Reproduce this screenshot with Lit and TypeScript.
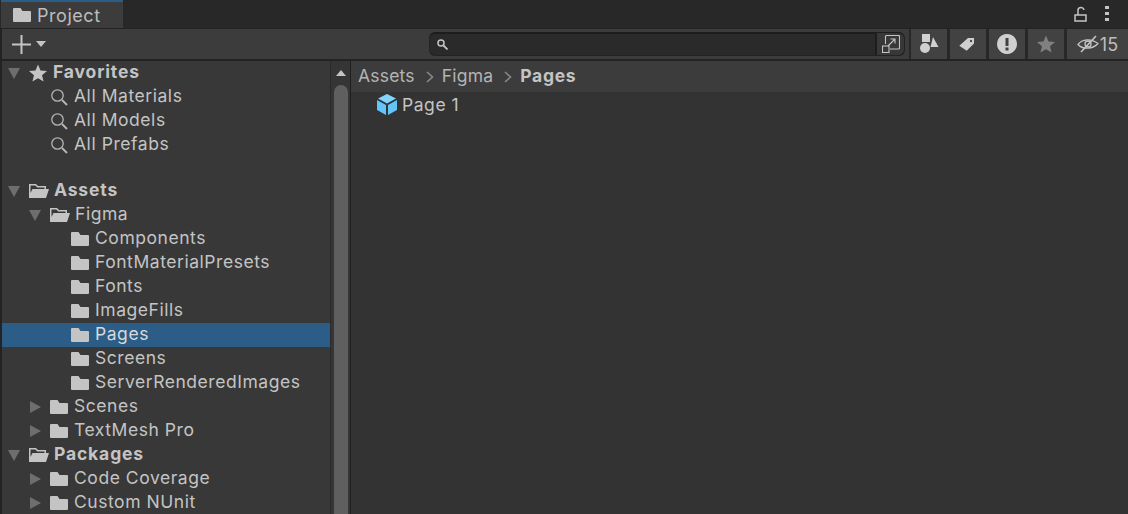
import { LitElement, html, css, svg } from 'lit';
import { customElement } from 'lit/decorators.js';

type Row = { label: string; depth: number; icon: 'star' | 'search' | 'open' | 'folder'; arrow?: 'down' | 'right'; bold?: boolean; selected?: boolean };

const ROWS: (Row | null)[] = [
  { label: 'Favorites', depth: 0, icon: 'star', arrow: 'down', bold: true },
  { label: 'All Materials', depth: 1, icon: 'search' },
  { label: 'All Models', depth: 1, icon: 'search' },
  { label: 'All Prefabs', depth: 1, icon: 'search' },
  null,
  { label: 'Assets', depth: 0, icon: 'open', arrow: 'down', bold: true },
  { label: 'Figma', depth: 1, icon: 'open', arrow: 'down' },
  { label: 'Components', depth: 2, icon: 'folder' },
  { label: 'FontMaterialPresets', depth: 2, icon: 'folder' },
  { label: 'Fonts', depth: 2, icon: 'folder' },
  { label: 'ImageFills', depth: 2, icon: 'folder' },
  { label: 'Pages', depth: 2, icon: 'folder', selected: true },
  { label: 'Screens', depth: 2, icon: 'folder' },
  { label: 'ServerRenderedImages', depth: 2, icon: 'folder' },
  { label: 'Scenes', depth: 1, icon: 'folder', arrow: 'right' },
  { label: 'TextMesh Pro', depth: 1, icon: 'folder', arrow: 'right' },
  { label: 'Packages', depth: 0, icon: 'open', arrow: 'down', bold: true },
  { label: 'Code Coverage', depth: 1, icon: 'folder', arrow: 'right' },
  { label: 'Custom NUnit', depth: 1, icon: 'folder', arrow: 'right' },
];

const ICON_FILL = '#c4c4c4';

const folderIcon = svg`<svg width="18" height="16" viewBox="0 0 18 16"><path fill=${ICON_FILL} d="M1 1h6.500l2 3H17a1 1 0 0 1 1 1v9a1 1 0 0 1-1 1H1a1 1 0 0 1-1-1V2a1 1 0 0 1 1-1z"/></svg>`;
const openIcon = svg`<svg width="20" height="16" viewBox="0 0 20 16"><path fill=${ICON_FILL} fill-rule="evenodd" d="M0 1h7l2 2h8v3h3l-3 9H0zM1.500 2.500v7.500L3.500 6H15.500V4.500H8.300l-2-2z"/></svg>`;
const searchIcon = svg`<svg width="18" height="18" viewBox="0 0 18 18"><circle cx="7.500" cy="7.500" r="5.700" fill="none" stroke="#b4b4b4" stroke-width="1.300"/><path d="M12 12l5 5" stroke="#b4b4b4" stroke-width="2"/></svg>`;
const starIcon = svg`<svg width="18" height="18" viewBox="0 0 18 18"><path fill=${ICON_FILL} d="M9 .5l2.500 6 6.500.5-5 4.300 1.600 6.300L9 14.200 3.400 17.600 5 11.300 0 7l6.500-.5z"/></svg>`;

const ICONS = { folder: folderIcon, open: openIcon, search: searchIcon, star: starIcon };

const chevron = svg`<svg width="8" height="12" viewBox="0 0 8 12" fill="none" stroke="#8a8a8a" stroke-width="1.600"><path d="M1 1l5.500 5L1 11" /></svg>`;

@customElement('app-root')
export class AppRoot extends LitElement {
  static styles = css`
    :host {
      display: block;
      width: 1128px;
      height: 514px;
      overflow: hidden;
      background: #232323;
      font-family: Inter, 'Noto Sans', sans-serif;
      font-size: 17.500px;
      letter-spacing: 0.55px;
      color: #c4c4c4;
    }

    .tabbar {
      height: 28px;
      display: flex;
      justify-content: space-between;
      background: #282828;
    }
    .tab {
      width: 122px;
      margin-left: 1px;
      height: 28px;
      box-sizing: border-box;
      background: #3c3c3c;
      border-top: 2px solid #2c5d87;
      display: flex;
      align-items: center;
      gap: 6px;
      padding-left: 12px;
      color: #bdbdbd;
      font-size: 18px;
    }
    .tab-actions {
      display: flex;
      align-items: center;
      gap: 17px;
      padding-right: 19px;
    }

    .toolbar {
      height: 30px;
      margin-top: 1px;
      display: flex;
      align-items: center;
      background: #3c3c3c;
      margin-left: 2px;
    }
    .create {
      display: flex;
      align-items: center;
      gap: 5px;
      padding-left: 10px;
    }
    .search-box {
      margin-left: 383px;
      width: 476px;
      height: 24px;
      box-sizing: border-box;
      background: #2a2a2a;
      border-radius: 6px;
      border: 1px solid #232323;
      border-top: 2px solid #1d1d1d;
      display: flex;
      align-items: center;
      justify-content: space-between;
      padding-left: 7px;
    }
    .search-expand {
      width: 27px;
      height: 22px;
      margin-top: -1px;
      background: #383838;
      border-left: 2px solid #1d1d1d;
      display: flex;
      align-items: center;
      justify-content: center;
      border-radius: 0 6px 6px 0;
    }
    .filters {
      display: flex;
      margin-left: 4px;
      padding-left: 2px;
      gap: 3px;
      background: #282828;
    }
    .filter {
      width: 36px;
      height: 30px;
      background: #424242;
      display: flex;
      align-items: center;
      justify-content: center;
    }
    .filter.wide {
      width: 61px;
      gap: 1px;
      font-size: 18px;
      color: #bdbdbd;
      letter-spacing: 0;
    }

    .main {
      margin-top: 2px;
      display: flex;
      height: 453px;
    }
    .tree {
      width: 328px;
      margin-left: 2px;
      background: #383838;
    }
    .row {
      height: 24px;
      display: flex;
      align-items: center;
      white-space: nowrap;
    }
    .row.selected {
      background: #2c5d87;
      color: #d8d8d8;
    }
    .row.bold {
      font-weight: 700;
      letter-spacing: 0.85px;
    }
    .label {
      padding-bottom: 4px;
    }
    .spacer {
      height: 22px;
    }
    .arrow {
      width: 12px;
      height: 12px;
      flex: none;
      margin-right: 9px;
    }
    .icon {
      flex: none;
      display: flex;
      align-items: center;
      margin-right: 6px;
    }
    .icon.tight {
      margin-right: 5px;
    }

    .scroll {
      width: 19px;
      background: #353535;
      border-left: 1px solid #2a2a2a;
      position: relative;
    }
    .scroll-up {
      position: absolute;
      left: 5px;
      top: 9px;
      width: 0;
      height: 0;
      border-left: 5px solid transparent;
      border-right: 5px solid transparent;
      border-bottom: 6px solid #c4c4c4;
    }
    .thumb {
      position: absolute;
      left: 3px;
      top: 24px;
      bottom: 0;
      width: 14px;
      background: #5f5f5f;
      border-radius: 7px 7px 0 0;
    }

    .content {
      flex: 1;
      background: #333333;
      border-left: 1px solid #1f1f1f;
    }
    .crumbs {
      height: 31px;
      box-sizing: border-box;
      padding: 0 0 2px 7px;
      background: #3c3c3c;
      display: flex;
      align-items: center;
      color: #b4b4b4;
      letter-spacing: 0.2px;
    }
    .crumbs b {
      color: #c4c4c4;
      font-weight: 700;
      letter-spacing: 0.7px;
    }
    .sep {
      display: flex;
      margin: 2px 8px 0 11px;
    }
    .asset {
      height: 24px;
      display: flex;
      align-items: center;
      gap: 5px;
      padding-left: 26px;
    }
  `;

  renderArrow(dir: 'down' | 'right') {
    const d = dir === 'down' ? 'M0 1h12L6 12z' : 'M1 0l11 6-11 6z';
    return html`<svg class="arrow" viewBox="0 0 12 12"><path fill="#6e6e6e" d=${d} /></svg>`;
  }

  renderRow(row: Row | null) {
    if (!row) return html`<div class="spacer"></div>`;
    const left = (row.arrow ? 6 : 27) + row.depth * 21;
    return html`
      <div class="row ${row.bold ? 'bold' : ''} ${row.selected ? 'selected' : ''}" style="padding-left: ${left}px">
        ${row.arrow ? this.renderArrow(row.arrow) : ''}
        <span class="icon ${row.icon === 'open' ? 'tight' : ''}">${ICONS[row.icon]}</span>
        <span class="label">${row.label}</span>
      </div>
    `;
  }

  render() {
    return html`
      <div class="tabbar">
        <div class="tab">
          <svg width="18" height="16" viewBox="0 0 18 16"><path fill=${ICON_FILL} d="M1 1h6.500l2 3H17a1 1 0 0 1 1 1v9a1 1 0 0 1-1 1H1a1 1 0 0 1-1-1V2a1 1 0 0 1 1-1z" /></svg>
          Project
        </div>
        <div class="tab-actions">
          <svg width="14" height="16" viewBox="0 0 14 16" fill="none" stroke="#c4c4c4" stroke-width="1.500">
            <path d="M1 9h11v6H1z" /><path d="M4 9V5a3 3 0 0 1 6-1" />
          </svg>
          <svg width="4" height="16" viewBox="0 0 4 16"><g fill="#c4c4c4"><rect y="0" width="4" height="3" /><rect y="6" width="4" height="3" /><rect y="12" width="4" height="3" /></g></svg>
        </div>
      </div>
      <div class="toolbar">
        <div class="create">
          <svg width="19" height="19" viewBox="0 0 19 19"><path fill="#c4c4c4" d="M8.500 0h2v8.500H19v2h-8.500V19h-2v-8.500H0v-2h8.500z" /></svg>
          <svg width="10" height="6" viewBox="0 0 10 6"><path fill="#c4c4c4" d="M0 0h10L5 6z" /></svg>
        </div>
        <div class="search-box">
          <svg width="11" height="11" viewBox="0 0 11 11" fill="none" stroke="#c4c4c4"><circle cx="4" cy="4" r="3" stroke-width="1.500" /><path d="M6.500 6.500l4 4" stroke-width="1.800" /></svg>
          <div class="search-expand">
            <svg width="18" height="18" viewBox="0 0 18 18" fill="none" stroke="#c4c4c4" stroke-width="1.100">
              <path d="M3.500 9V1.500a1 1 0 0 1 1-1h12a1 1 0 0 1 1 1V13a1 1 0 0 1-1 1H8" />
              <rect x=".5" y="11" width="6.500" height="6.500" />
              <path d="M6 11l7-7M8.500 4H13v4.500" />
            </svg>
          </div>
        </div>
        <div class="filters">
          <div class="filter">
            <svg width="20" height="20" viewBox="0 0 20 20"><g fill="#d0d0d0"><rect x="3" y="0" width="8" height="8" /><circle cx="6" cy="14" r="5" /><path d="M14 3l5.500 10h-8z" /></g></svg>
          </div>
          <div class="filter">
            <svg width="18" height="18" viewBox="0 0 18 18"><path fill="#d0d0d0" fill-rule="evenodd" d="M9 3h6v5.500L7.700 15.700.3 10.700zM12 4.800a1.200 1.200 0 1 0 .01 0z" /></svg>
          </div>
          <div class="filter">
            <svg width="20" height="20" viewBox="0 0 20 20"><path fill="#d0d0d0" fill-rule="evenodd" d="M10 0a10 10 0 1 0 .01 0zM8.500 4h3v8h-3zM8.500 13.500h3v3h-3z" /></svg>
          </div>
          <div class="filter">
            <svg width="18" height="18" viewBox="0 0 18 18"><path fill="#808080" d="M9 .5l2.500 6 6.500.5-5 4.300 1.600 6.300L9 14.200 3.400 17.600 5 11.300 0 7l6.500-.5z" /></svg>
          </div>
          <div class="filter wide">
            <svg width="22" height="18" viewBox="0 0 22 18" fill="none" stroke="#c4c4c4" stroke-width="1.300">
              <path d="M1 9.500C5 4 14 3 21 8.500 16 14 6 15 1 9.500z" /><circle cx="11" cy="9" r="3" /><path d="M4 17L19 1" stroke-width="1.600" />
            </svg>
            15
          </div>
        </div>
      </div>
      <div class="main">
        <div class="tree">${ROWS.map((r) => this.renderRow(r))}</div>
        <div class="scroll">
          <div class="scroll-up"></div>
          <div class="thumb"></div>
        </div>
        <div class="content">
          <div class="crumbs">
            Assets
            <span class="sep">${chevron}</span>
            Figma
            <span class="sep">${chevron}</span>
            <b>Pages</b>
          </div>
          <div class="asset">
            <svg width="20" height="21" viewBox="0 0 20 21">
              <path fill="#80d4ff" d="M10 0l9 4.500L10 9.500 1 4.500z" />
              <path fill="#62c6fb" d="M0 6l9 5v10L0 16z" />
              <path fill="#62c6fb" d="M20 6l-9 5v10l9-5z" />
            </svg>
            Page 1
          </div>
        </div>
      </div>
    `;
  }
}
